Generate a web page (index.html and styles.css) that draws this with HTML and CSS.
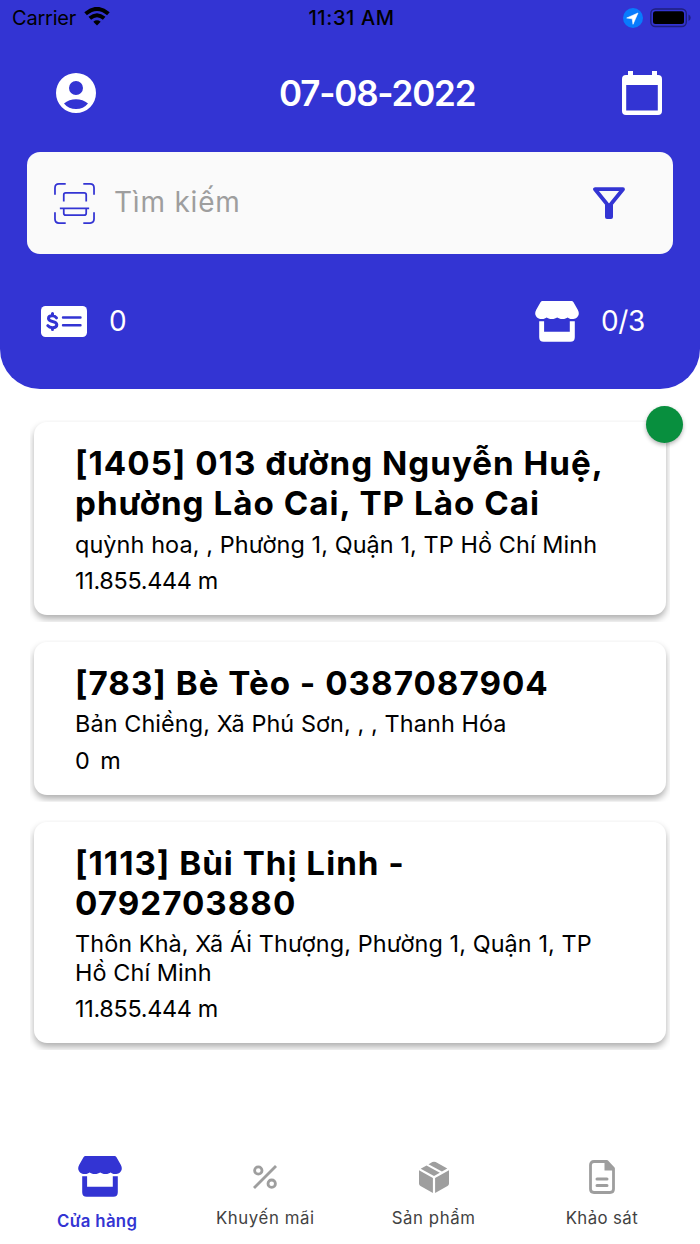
FILE: index.html
```
<!DOCTYPE html>
<html lang="vi">
<head>
    <meta charset="UTF-8">
    <meta name="viewport" content="width=device-width, initial-scale=1.0">
    <title>Cửa hàng</title>
    <link rel="stylesheet" href="styles.css">
</head>
<body>
    <svg class="symbols" aria-hidden="true">
        <symbol id="store" viewBox="0 0 44 41">
            <path d="M7.500 0h29q1.200 0 2 1.200l4.400 7.700Q44 11 43.800 13c-.7 3.800-4.200 5.300-7 5.100-2 0-3.200-.8-4.200-1.600-1.200.8-2.600 1.600-5.100 1.600-2.600 0-3.900-.8-5.300-1.600-1.400.8-3 1.600-5.400 1.600-2.500 0-4-.8-5.200-1.600-1.100.8-2.500 1.600-4.500 1.600C3.500 18.300.8 16.200.2 13Q0 11 1.100 8.900l4.400-7.700Q6.300 0 7.500 0z"/>
            <path d="M4.200 20.200h4.900v10.600h25.700V20.200h5v16q0 4.500-4.500 4.500H8.700q-4.500 0-4.500-4.500z"/>
        </symbol>
    </svg>

    <header class="header">
        <div class="status-bar">
            <div class="status-left">
                <span class="carrier">Carrier</span>
                <svg class="wifi" viewBox="0 0 26 19">
                    <path d="M13 18.500l-3.700-3.800q3.700-2.900 7.400 0z" fill="#000"/>
                    <path d="M5.800 11.300q7.200-6.100 14.400 0M1.600 6.800q11.400-9.800 22.800 0" fill="none" stroke="#000" stroke-width="4"/>
                </svg>
            </div>
            <span class="clock">11:31 AM</span>
            <div class="status-right">
                <svg class="location" viewBox="0 0 20 20">
                    <circle cx="10" cy="10" r="10" fill="#087bfd"/>
                    <path d="M15 5L3.700 10l5.500.8.8 5.500z" fill="#fff" stroke="#fff" stroke-width=".6" stroke-linejoin="round"/>
                </svg>
                <svg class="battery" viewBox="0 0 41 20">
                    <rect x=".8" y="1" width="35.500" height="17.500" rx="4.500" fill="none" stroke="#1f1f7e" stroke-width="1.400"/>
                    <rect x="3" y="3.300" width="31" height="12.800" rx="2.500"/>
                    <path d="M38.500 6.500q2.200 1 2.200 3.300t-2.200 3.300z" fill="#1f1f7e"/>
                </svg>
            </div>
        </div>

        <div class="title-bar">
            <svg class="account" viewBox="2 2 20 20">
                <path d="M12 2a10 10 0 1 0 0 20 10 10 0 0 0 0-20zm0 4a3.500 3.500 0 1 1 0 7 3.500 3.500 0 0 1 0-7zm0 14c-2.300 0-4.500-1-6-2.800 1.500-1.300 3.900-2.100 6-2.100s4.500.8 6 2.100A7.700 7.700 0 0 1 12 20z"/>
            </svg>
            <h1 class="date">07-08-2022</h1>
            <svg class="calendar" viewBox="0 0 40 44">
                <path fill-rule="evenodd" d="M6 0h5v4h19V0h5v4h1q4 0 4 4v32q0 4-4 4H4q-4 0-4-4V8q0-4 4-4h2zM4.200 14v25.500h31.600V14z"/>
            </svg>
        </div>

        <div class="search">
            <svg class="scan" viewBox="0 0 42 42">
                <path d="M1 12V5q0-4 4-4h7M30 1h7q4 0 4 4v7M41 30v7q0 4-4 4h-7M12 41H5q-4 0-4-4v-7M10 19v-7q0-2 2-2h19q2 0 2 2v7M6 26h30M10 26v5q0 2 2 2h19q2 0 2-2v-5"/>
            </svg>
            <span class="placeholder">Tìm kiếm</span>
            <svg class="filter" viewBox="0 0 32 33">
                <path d="M2 2.200h28L16 19.500z" fill="none" stroke="#3334d3" stroke-width="3.800" stroke-linejoin="round"/>
                <path d="M12 17.500h8V30q0 2-2 2h-4q-2 0-2-2z" fill="#3334d3"/>
            </svg>
        </div>

        <div class="stats">
            <div class="stat">
                <svg class="money" viewBox="0 0 46 31">
                    <rect width="46" height="31" rx="4.500" fill="#fff"/>
                    <g fill="none" stroke="#3334d3" stroke-linecap="round">
                        <path d="M15.500 11.800q-1.500-2-4.200-2-3.800 0-3.800 2.700 0 2.200 4 2.900 4.300.8 4.300 3.400 0 2.900-4.200 2.900-3.300 0-4.800-2M11.500 7.500v2M11.500 22v1.500" stroke-width="3"/>
                        <path d="M22 11.500h17.500M22 19.300h17.500" stroke-width="2.400"/>
                    </g>
                </svg>
                <span class="stat-value">0</span>
            </div>
            <div class="stat">
                <svg class="store-icon"><use href="#store"/></svg>
                <span class="stat-value stat-ratio">0/3</span>
            </div>
        </div>
    </header>

    <main class="store-list">
        <div class="item">
            <article class="card">
                <h2 class="name">[1405] 013 đường Nguyễn Huệ, phường Lào Cai, TP Lào Cai</h2>
                <p class="address">quỳnh hoa, , Phường 1, Quận 1, TP Hồ Chí Minh</p>
                <p class="distance">11.855.444 m</p>
            </article>
            <span class="badge"></span>
        </div>
        <div class="item">
            <article class="card">
                <h2 class="name">[783] Bè Tèo - 0387087904</h2>
                <p class="address">Bản Chiềng, Xã Phú Sơn, , , Thanh Hóa</p>
                <p class="distance distance-short">0 m</p>
            </article>
        </div>
        <div class="item">
            <article class="card">
                <h2 class="name">[1113] Bùi Thị Linh - 0792703880</h2>
                <p class="address">Thôn Khà, Xã Ái Thượng, Phường 1, Quận 1, TP Hồ Chí Minh</p>
                <p class="distance">11.855.444 m</p>
            </article>
        </div>
    </main>

    <nav class="tabs">
        <a class="tab active">
            <span class="tab-icon"><svg class="store-icon"><use href="#store"/></svg></span>
            <span class="tab-label">Cửa hàng</span>
        </a>
        <a class="tab">
            <span class="tab-icon">
                <svg width="24" height="24" viewBox="0 0 24 24" fill="none" stroke="#9e9e9e" stroke-width="2.800">
                    <path d="M1 23L23 1"/>
                    <circle cx="5.300" cy="5.500" r="3.700"/>
                    <circle cx="18.700" cy="18.700" r="3.700"/>
                </svg>
            </span>
            <span class="tab-label">Khuyến mãi</span>
        </a>
        <a class="tab">
            <span class="tab-icon">
                <svg width="30" height="32" viewBox="0 0 30 32" fill="#9e9e9e">
                    <path d="M10.500 2.700l2.800-1.600q1.700-.9 3.400 0L28.300 7.500l-5.400 3.100L9.500 3.300z"/>
                    <path d="M7.500 4.500l13.300 7.300-5.800 3.300L1.700 7.700z"/>
                    <path d="M0 9.300l13.900 7.800V32L1.500 25.100Q0 24.200 0 22.500zM30 9.300l-13.900 7.800V32l12.400-6.900q1.500-.9 1.500-2.600z"/>
                </svg>
            </span>
            <span class="tab-label">Sản phẩm</span>
        </a>
        <a class="tab">
            <span class="tab-icon">
                <svg width="26" height="34" viewBox="0 0 26 34">
                    <path d="M16.500 1.500H5Q1.500 1.500 1.500 5v24q0 3.500 3.500 3.500h16q3.500 0 3.500-3.500V8.500L18 1.500z" fill="none" stroke="#9e9e9e" stroke-width="2.800" stroke-linejoin="round"/>
                    <path d="M15.500 1.500v9h9.500V8.500L18 1.500z" fill="#9e9e9e"/>
                    <path d="M8 19h10M8 25.500h10" stroke="#9e9e9e" stroke-width="3" stroke-linecap="round"/>
                </svg>
            </span>
            <span class="tab-label tab-label-short">Khảo sát</span>
        </a>
    </nav>
</body>
</html>
```
FILE: styles.css
```
* {
    margin: 0;
    padding: 0;
    box-sizing: border-box;
}

body {
    height: 1244px;
    display: flex;
    flex-direction: column;
    background-color: #fff;
    color: #000;
    font-family: Inter, "Noto Sans", sans-serif;
    overflow: hidden;
}

svg {
    display: block;
    flex-shrink: 0;
}

.symbols {
    width: 0;
    height: 0;
}

.header {
    height: 389px;
    background-color: #3334d3;
    border-radius: 0 0 40px 40px;
}

.status-bar {
    height: 36px;
    padding: 0 9px 0 12px;
    display: grid;
    grid-template-columns: 1fr auto 1fr;
    align-items: center;
    font-size: 20px;
}

.status-left,
.status-right {
    display: flex;
    align-items: center;
}

.status-left {
    gap: 8px;
}

.status-right {
    justify-content: flex-end;
    gap: 7px;
}

.carrier {
    letter-spacing: -0.2px;
}

.wifi {
    width: 26px;
    height: 19px;
    margin-top: -3px;
}

.clock {
    font-weight: 500;
    letter-spacing: 0.6px;
}

.location {
    width: 20px;
    height: 20px;
}

.battery {
    width: 41px;
    height: 20px;
}

.title-bar {
    height: 116px;
    padding: 0 38px 0 56px;
    display: flex;
    align-items: center;
    justify-content: space-between;
}

.account {
    width: 40px;
    height: 40px;
    fill: #fff;
    margin-top: -2px;
}

.calendar {
    width: 40px;
    height: 44px;
    fill: #fff;
    margin-top: -2px;
}

.date {
    margin: -2px 0 0 36px;
    width: 196px;
    font-size: 35px;
    font-weight: 600;
    color: #fff;
    letter-spacing: -1.2px;
    white-space: nowrap;
}

.search {
    height: 102px;
    margin: 0 27px;
    padding: 0 48px 0 27px;
    display: flex;
    align-items: center;
    background-color: #fafafa;
    border-radius: 13px;
}

.scan {
    width: 41px;
    height: 41px;
    fill: none;
    stroke: #3334d3;
    stroke-width: 1.8;
}

.placeholder {
    flex: 1;
    margin: -3px 0 0 19px;
    font-size: 28px;
    color: #9e9e9e;
    letter-spacing: 0.8px;
}

.filter {
    width: 32px;
    height: 33px;
}

.stats {
    height: 134px;
    padding: 0 55px 0 41px;
    display: flex;
    align-items: center;
    justify-content: space-between;
}

.stat {
    display: flex;
    align-items: center;
}

.money {
    width: 46px;
    height: 31px;
}

.store-icon {
    width: 44px;
    height: 41px;
    fill: #fff;
}

.stat-value {
    margin-left: 22px;
    font-size: 28px;
    color: #fff;
}

.stat-ratio {
    width: 44px;
    letter-spacing: -0.4px;
}

.store-list {
    flex: 1;
    padding: 33px 27px 0;
}

.item {
    position: relative;
    margin-bottom: 27px;
}

/* the card shadow is cut off just below the card */
.card {
    margin: 0 7px;
    padding: 21px 41px 20px;
    border-radius: 13px;
    background-color: #fff;
    box-shadow: 0 4px 7px rgba(0, 0, 0, 0.32);
    clip-path: inset(-2px -4px -7px -4px);
}

.name {
    font-size: 33.2px;
    font-weight: 700;
    line-height: 40.3px;
    letter-spacing: 1px;
}

.address {
    margin-top: 7px;
    font-size: 23.4px;
    line-height: 28.4px;
    letter-spacing: 0.1px;
}

.distance {
    margin-top: 7px;
    font-size: 23.4px;
    line-height: 29px;
    letter-spacing: -0.3px;
}

.distance-short {
    letter-spacing: 2px;
}

.badge {
    position: absolute;
    top: -16px;
    right: -10px;
    width: 37px;
    height: 37px;
    border-radius: 50%;
    background-color: #088f3e;
    box-shadow: 0 2px 4px rgba(0, 0, 0, 0.3);
}

.tabs {
    height: 104px;
    padding: 0 14px 0 13px;
    display: grid;
    grid-template-columns: repeat(4, 1fr);
}

.tab {
    display: flex;
    flex-direction: column;
    align-items: center;
    color: #424242;
    font-size: 16.8px;
    letter-spacing: 0.6px;
}

.tab-icon {
    height: 74px;
    display: flex;
    align-items: center;
}

.tab-label {
    line-height: 20px;
    margin-top: -6px;
    white-space: nowrap;
}

.tab-label-short {
    letter-spacing: 0.4px;
}

.active {
    color: #3334d3;
    font-weight: 600;
    letter-spacing: 0.3px;
}

.active .tab-icon {
    height: 72px;
}

.active .tab-label {
    margin-top: -1px;
}

.active .store-icon {
    margin-left: 6px;
    fill: #3334d3;
}
```
